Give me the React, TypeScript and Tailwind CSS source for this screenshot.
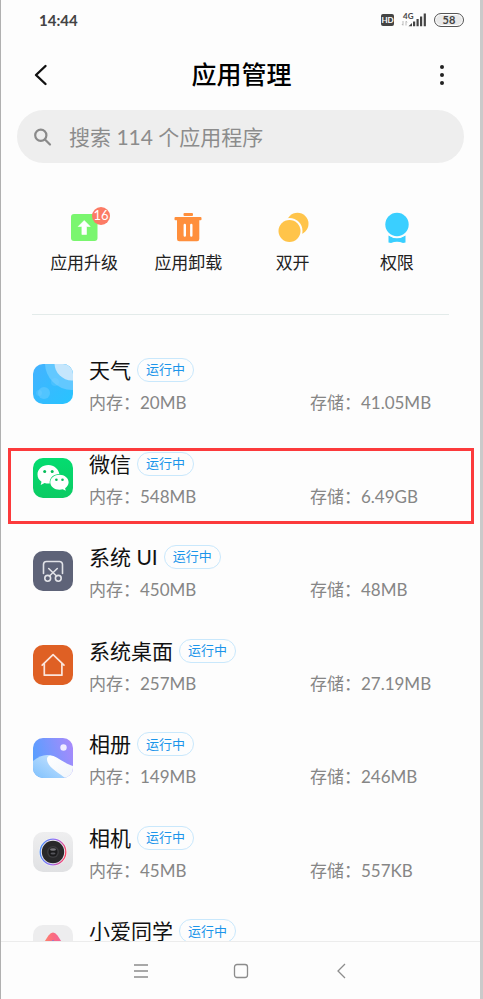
import type { ReactNode } from "react";

type AppEntry = {
  name: string;
  memory?: string;
  storage?: string;
  icon: ReactNode;
  highlighted?: boolean;
};

function WeatherIcon() {
  return (
    <svg viewBox="0 0 40 40" className="size-10" aria-hidden="true">
      <defs>
        <linearGradient id="sky" x1="0" y1="0" x2="1" y2="1">
          <stop offset="0" stopColor="#45b2ff" />
          <stop offset="1" stopColor="#27c4ff" />
        </linearGradient>
        <clipPath id="weatherClip"><rect width="40" height="40" rx="10" /></clipPath>
      </defs>
      <g clipPath="url(#weatherClip)">
        <rect width="40" height="40" fill="url(#sky)" />
        <circle cx="39" cy="-1" r="27" fill="#62c8ff" />
        <circle cx="39" cy="-1" r="17.500" fill="#c5e6fc" />
        <circle cx="11" cy="29" r="6" fill="#6dceff" opacity=".5" />
        <circle cx="22" cy="18" r="4" fill="#7fd4ff" opacity=".25" />
        <circle cx="6" cy="29" r="3" fill="#7fd4ff" opacity=".25" />
      </g>
    </svg>
  );
}

function WeChatIcon() {
  return (
    <svg viewBox="0 0 40 40" className="size-10" aria-hidden="true">
      <defs>
        <linearGradient id="wechatGreen" x1="0" y1="0" x2="0" y2="1">
          <stop offset="0" stopColor="#04dc70" />
          <stop offset="1" stopColor="#0bcb63" />
        </linearGradient>
      </defs>
      <rect width="40" height="40" rx="10" fill="url(#wechatGreen)" />
      <path d="M15.500 7C9.200 7 4.500 11.200 4.500 16.500c0 3 1.500 5.600 4 7.300L7.700 27l3.900-2c1.200.4 2.500.6 3.900.6h1.200C16.300 19.500 20.500 16 26.400 16 25.600 11 21 7 15.500 7z" fill="#fff" />
      <path d="M26.500 16.800c-5.200 0-9.200 3.300-9.200 7.500s4 7.500 9.200 7.500c1.200 0 2.300-.2 3.300-.5l3 1.500-.7-2.600c2.200-1.400 3.500-3.500 3.500-5.900 0-4.200-4-7.500-9.100-7.500z" fill="#fff" />
      <circle cx="11.700" cy="13.500" r="1.500" fill="#07bd5b" />
      <circle cx="19.200" cy="13.500" r="1.500" fill="#07bd5b" />
      <circle cx="23.400" cy="21.700" r="1.300" fill="#07bd5b" />
      <circle cx="29.500" cy="21.700" r="1.300" fill="#07bd5b" />
    </svg>
  );
}

function SystemUiIcon() {
  return (
    <svg viewBox="0 0 40 40" className="size-10" aria-hidden="true">
      <rect width="40" height="40" rx="10" fill="#5e6378" />
      <g fill="none" stroke="#e2e3e8" strokeWidth="1.600" strokeLinecap="round">
        <path d="M10.500 22.500V13.500a3 3 0 0 1 3-3h13a3 3 0 0 1 3 3v9" />
        <path d="M15.700 17.500l7.800 7.500M24.300 17.500l-7.800 7.500" />
        <circle cx="14.700" cy="27.300" r="2.900" />
        <circle cx="25.300" cy="27.300" r="2.900" />
      </g>
    </svg>
  );
}

function LauncherIcon() {
  return (
    <svg viewBox="0 0 40 40" className="size-10" aria-hidden="true">
      <rect width="40" height="40" rx="10" fill="#df6024" />
      <path d="M11.300 18.500V30.200h17.600V18.500M9.200 20.200L20.100 9.700 31 20.200" fill="none" stroke="#fbe5dc" strokeWidth="1.700" strokeLinecap="round" strokeLinejoin="round" />
    </svg>
  );
}

function GalleryIcon() {
  return (
    <svg viewBox="0 0 40 40" className="size-10" aria-hidden="true">
      <defs>
        <linearGradient id="dusk" x1="0" y1=".5" x2="1" y2=".2">
          <stop offset="0" stopColor="#579fff" />
          <stop offset="1" stopColor="#a78afb" />
        </linearGradient>
        <linearGradient id="slope" x1="0" y1="1" x2="1" y2="0">
          <stop offset="0" stopColor="#7fc1fd" />
          <stop offset="1" stopColor="#d3e8fe" />
        </linearGradient>
        <linearGradient id="snow" x1="0" y1="0" x2="1" y2="1">
          <stop offset="0" stopColor="#ffffff" />
          <stop offset="1" stopColor="#f1f5fa" />
        </linearGradient>
        <clipPath id="galleryClip"><rect width="40" height="40" rx="10" /></clipPath>
      </defs>
      <g clipPath="url(#galleryClip)">
        <rect width="40" height="40" fill="url(#dusk)" />
        <path d="M0 23C6 18 12 16 18 17.500L36 40H0z" fill="url(#slope)" />
        <path d="M14 21c0-3 3-4.500 6.500-3C27 21 33 26 40 28v12h-8C26 35 14 29 14 21z" fill="url(#snow)" />
        <circle cx="30.500" cy="9.500" r="3.200" fill="#f0ecff" />
      </g>
    </svg>
  );
}

function CameraIcon() {
  return (
    <svg viewBox="0 0 40 40" className="size-10" aria-hidden="true">
      <defs>
        <linearGradient id="body" x1="0" y1="0" x2="0" y2="1">
          <stop offset="0" stopColor="#eeeeef" />
          <stop offset="1" stopColor="#e0e1e3" />
        </linearGradient>
        <linearGradient id="ring" x1="0" y1=".4" x2="1" y2=".6">
          <stop offset="0" stopColor="#4a8cf6" />
          <stop offset=".55" stopColor="#9c6cf0" />
          <stop offset="1" stopColor="#ff4560" />
        </linearGradient>
      </defs>
      <rect width="40" height="40" rx="10" fill="url(#body)" />
      <circle cx="20" cy="20" r="14" fill="#f7f7fa" />
      <circle cx="20" cy="20" r="12.800" fill="#eceaf2" stroke="url(#ring)" strokeWidth="1.300" />
      <circle cx="20" cy="20" r="11.200" fill="#29292b" />
      <circle cx="20" cy="20" r="6" fill="#3c3c3f" />
      <circle cx="20" cy="20" r="4.500" fill="#1b1b1d" />
      <ellipse cx="20" cy="17.500" rx="3" ry="1.300" fill="#77777c" />
      <ellipse cx="20" cy="21.500" rx="2.500" ry="1" fill="#55555b" />
    </svg>
  );
}

function AssistantIcon() {
  return (
    <svg viewBox="0 0 40 40" className="size-10" aria-hidden="true">
      <defs>
        <linearGradient id="prism" x1="0" y1="0" x2="1" y2="0">
          <stop offset="0" stopColor="#ff9a5c" />
          <stop offset=".5" stopColor="#fb6b80" />
          <stop offset="1" stopColor="#e85fb4" />
        </linearGradient>
      </defs>
      <rect width="40" height="40" rx="10" fill="#ededee" />
      <path d="M15.500 10.500Q20 4.500 24.500 10.500L36 28q1 4-3 4H7q-4 0-3-4z" fill="url(#prism)" />
      <path d="M17.500 17l2.500-2 2.500 2v8h-5z" fill="#6f7be8" />
    </svg>
  );
}

const apps: AppEntry[] = [
  { name: "天气", memory: "20MB", storage: "41.05MB", icon: <WeatherIcon /> },
  { name: "微信", memory: "548MB", storage: "6.49GB", icon: <WeChatIcon />, highlighted: true },
  { name: "系统 UI", memory: "450MB", storage: "48MB", icon: <SystemUiIcon /> },
  { name: "系统桌面", memory: "257MB", storage: "27.19MB", icon: <LauncherIcon /> },
  { name: "相册", memory: "149MB", storage: "246MB", icon: <GalleryIcon /> },
  { name: "相机", memory: "45MB", storage: "557KB", icon: <CameraIcon /> },
  { name: "小爱同学", icon: <AssistantIcon /> },
];

function StatusBar() {
  return (
    <div className="flex h-10 items-center justify-between pr-4 pl-[38px] text-[#444]">
      <time className="text-[15px] font-bold">14:44</time>
      <div className="flex items-center gap-[7px]">
        <span className="flex h-3 w-[13px] items-center justify-center rounded-xs bg-[#444] text-[8px] font-bold text-white">HD</span>
        <div className="relative h-4 w-[26px]">
          <svg viewBox="0 0 26 16" className="h-4 w-[26px]" aria-label="信号">
            <path d="M7.500 14.200L11 11v3.200zM12 14.200V9.500h2.200v4.700zM15.500 14.200V7h2.200v7.200zM19 14.200V4.500h2.200v9.700zM22.700 14.200V1.500h2.200v12.700z" fill="#444" />
            <path d="M2 9v4M1 12l1 1.500M5 13.500v-4M5 9l1 1.500" stroke="#aaa" strokeWidth=".8" fill="none" />
          </svg>
          <span className="absolute top-0 left-0.5 text-[8px] leading-[8px] font-bold">4G</span>
        </div>
        <span className="flex h-[14px] w-[30px] items-center justify-center rounded-full border-[1.5px] border-[#555] bg-[#e9e9e9] text-[11px] font-bold ring-1 ring-white ring-inset">58</span>
      </div>
    </div>
  );
}

function QuickAction({ label, badge, children }: { label: string; badge?: string; children: ReactNode }) {
  return (
    <button type="button" className="flex flex-col items-center gap-2">
      <span className="relative">
        <svg viewBox="0 0 32 32" className="size-8" aria-hidden="true">{children}</svg>
        {badge && (
          <span className="absolute -top-1 -right-[10px] flex size-[18px] items-center justify-center rounded-full bg-[#fc7b65] text-[13px] text-white">
            {badge}
          </span>
        )}
      </span>
      <span className="text-[17px] leading-6 text-[#222]">{label}</span>
    </button>
  );
}

function AppRow({ app }: { app: AppEntry }) {
  return (
    <li className="relative flex items-start gap-4 px-8">
      <span className="mt-2 shrink-0">{app.icon}</span>
      <div className="min-w-0 flex-1">
        <div className="flex items-center gap-1.5">
          <h2 className="text-[21px] leading-7 text-[#111]">{app.name}</h2>
          <span className="flex h-6 items-center rounded-full border border-[#c9e8fc] px-2 text-[13px] text-[#1b95ea]">运行中</span>
        </div>
        {app.memory && (
          <div className="mt-[5px] grid grid-cols-[8fr_5fr] text-[17px] leading-7 whitespace-nowrap text-[#868686]">
            <span>内存：{app.memory}</span>
            <span>存储：{app.storage}</span>
          </div>
        )}
      </div>
      {app.highlighted && (
        <span className="pointer-events-none absolute -top-0.5 right-[6px] left-[7px] h-[76px] border-3 border-[#fc3a3c]" />
      )}
    </li>
  );
}

export default function App() {
  return (
    <div className="flex h-screen flex-col overflow-hidden border-r-3 border-l border-r-[#cacaca] border-l-[#b0b0b0] bg-[#fdfdfd] font-[Lato,'Noto_Sans_CJK_SC',sans-serif]">
      <StatusBar />
      <header className="flex h-[70px] items-center justify-between pr-[26px] pl-7">
        <button type="button" aria-label="返回">
          <svg viewBox="0 0 24 24" className="size-6" fill="none" stroke="#111" strokeWidth="2.400" strokeLinecap="round" strokeLinejoin="round">
            <path d="M16.500 3L7 12 16.500 21" />
          </svg>
        </button>
        <h1 className="text-[25px] font-medium text-black">应用管理</h1>
        <button type="button" aria-label="更多">
          <svg viewBox="0 0 24 24" className="size-6" fill="#222">
            <circle cx="12" cy="4" r="2" />
            <circle cx="12" cy="12" r="2" />
            <circle cx="12" cy="20" r="2" />
          </svg>
        </button>
      </header>
      <label className="mx-4 flex h-[53px] shrink-0 items-center gap-4 rounded-full bg-[#eee] px-4">
        <svg viewBox="0 0 20 20" className="size-5 shrink-0" fill="none" stroke="#8a8a8a" strokeWidth="2.200" strokeLinecap="round" aria-hidden="true">
          <circle cx="7.800" cy="8.300" r="5.600" />
          <path d="M12 12.500l5 5" />
        </svg>
        <input
          type="search"
          aria-label="搜索应用程序"
          placeholder="搜索 114 个应用程序"
          className="min-w-0 flex-1 bg-transparent text-[21px] outline-none placeholder:text-[#8c8c8c]"
        />
      </label>
      <nav className="mx-[31px] grid shrink-0 grid-cols-4 border-b border-[#e3ebea] pt-12 pb-[39px]">
        <QuickAction label="应用升级" badge="16">
          <rect x="3" y="3" width="26.500" height="27" rx="3" fill="#7af66f" />
          <path d="M16.200 9.500l6 6h-3.700v8h-4.600v-8h-3.700z" fill="#fff" stroke="#fff" strokeWidth=".6" strokeLinejoin="round" />
        </QuickAction>
        <QuickAction label="应用卸载">
          <rect x="11.500" y="2" width="9.500" height="3" rx="1" fill="#ff8f3c" />
          <path d="M3.500 6h25q1 0 1 1v1.500q0 .8-1 .8H27.300V28q0 2.200-2.200 2.200H7.200Q5 30.200 5 28V9.300H3.500q-1 0-1-.8V7q0-1 1-1z" fill="#ff8f3c" />
          <path d="M12.800 14v10.500M19.300 14v10.500" stroke="#fff" strokeWidth="2.400" strokeLinecap="round" />
        </QuickAction>
        <QuickAction label="双开">
          <circle cx="20.500" cy="12.800" r="11" fill="#ffc44a" />
          <circle cx="12.500" cy="20" r="13" fill="#fdfdfd" />
          <circle cx="12.500" cy="20" r="11" fill="#ffc44a" />
        </QuickAction>
        <QuickAction label="权限">
          <path d="M7.500 24.500Q16 30 24.500 24.500V31.500L22 32Q16 29.500 10 32L7.500 31.500z" fill="#3acfff" />
          <circle cx="16" cy="13.500" r="13.500" fill="#fdfdfd" />
          <circle cx="16" cy="13.500" r="11.700" fill="#3acfff" />
        </QuickAction>
      </nav>
      <main className="min-h-0 flex-1 overflow-hidden pt-[41px]">
        <ul className="grid min-h-[655px] auto-rows-fr">
          {apps.map((app) => (
            <AppRow key={app.name} app={app} />
          ))}
        </ul>
      </main>
      <footer className="flex h-[58px] shrink-0 items-center justify-center border-t border-[#ececec] text-[#8c8c8c]">
        <button type="button" aria-label="菜单" className="flex w-[100px] justify-center">
          <svg viewBox="0 0 16 16" className="size-4" fill="none" stroke="currentColor" strokeWidth="1.300">
            <path d="M1 2h14M1 8h14M1 14h14" />
          </svg>
        </button>
        <button type="button" aria-label="主页" className="flex w-[100px] justify-center">
          <svg viewBox="0 0 16 16" className="size-4" fill="none" stroke="currentColor" strokeWidth="1.300">
            <rect x="1.500" y="1.500" width="13" height="13" rx="2.500" />
          </svg>
        </button>
        <button type="button" aria-label="后退" className="flex w-[100px] justify-center">
          <svg viewBox="0 0 16 16" className="size-4" fill="none" stroke="currentColor" strokeWidth="1.300">
            <path d="M12 1L5 8l7 7" />
          </svg>
        </button>
      </footer>
    </div>
  );
}
